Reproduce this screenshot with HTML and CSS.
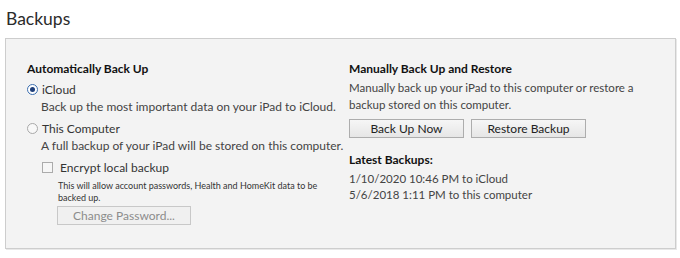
FILE: index.html
```html
<!DOCTYPE html>
<html>
<head>
<meta charset="utf-8">
<link rel="stylesheet" href="styles.css">
</head>
<body>
<h1 class="title">Backups</h1>
<div class="panel">
  <div class="col left">
    <div class="heading">Automatically Back Up</div>
    <div class="radio-row">
      <span class="radio checked"></span><span class="label">iCloud</span>
    </div>
    <div class="desc">Back up the most important data on your iPad to iCloud.</div>
    <div class="radio-row second">
      <span class="radio"></span><span class="label">This Computer</span>
    </div>
    <div class="desc">A full backup of your iPad will be stored on this computer.</div>
    <div class="check-row">
      <span class="checkbox"></span><span class="label">Encrypt local backup</span>
    </div>
    <div class="small">This will allow account passwords, Health and HomeKit data to be<br>backed up.</div>
    <div class="btn disabled pw">Change Password...</div>
  </div>
  <div class="col right">
    <div class="heading">Manually Back Up and Restore</div>
    <div class="rdesc">Manually back up your iPad to this computer or restore a<br>backup stored on this computer.</div>
    <div class="btns">
      <div class="btn b1">Back Up Now</div>
      <div class="btn b2">Restore Backup</div>
    </div>
    <div class="heading latest">Latest Backups:</div>
    <div class="line">1/10/2020 10:46 PM to iCloud</div>
    <div class="line">5/6/2018 1:11 PM to this computer</div>
  </div>
</div>
</body>
</html>
```
FILE: styles.css
```css
html, body { margin: 0; padding: 0; background: #fff; }
body {
  font-family: Lato, "Noto Sans", sans-serif;
  font-size: 12px;
  color: #333;
  width: 680px;
  height: 258px;
  overflow: hidden;
  white-space: nowrap;
}
.title {
  margin: 0;
  padding: 8px 0 0 6px;
  height: 30px;
  box-sizing: border-box;
  font-weight: normal;
  font-size: 17.5px;
  line-height: 22px;
  color: #2b2b2b;
}
.panel {
  margin: 8px 0 0 5px;
  width: 671px;
  height: 211px;
  box-sizing: border-box;
  background: #f3f3f3;
  border: 1px solid #cdcdcd;
  box-shadow: 1px 1px 0 #e8e8e8;
  display: flex;
  padding: 22px 0 0 21px;
}
.col.left { width: 322px; }
.heading {
  font-weight: bold;
  color: #111;
  font-size: 12px;
  line-height: 16px;
}
.radio-row, .check-row {
  display: flex;
  align-items: center;
  height: 16px;
  margin-top: 4px;
}
.radio-row.second { margin-top: 5px; }
.radio {
  width: 9px;
  height: 9px;
  border: 1px solid #a8a8a8;
  border-radius: 50%;
  background: #f8f8f8;
  margin-right: 4px;
  position: relative;
  box-sizing: content-box;
}
.radio.checked { border-color: #3c6fb0; background: #fff; }
.radio.checked::after {
  content: "";
  position: absolute;
  left: 2px; top: 2px;
  width: 5px; height: 5px;
  border-radius: 50%;
  background: #1f3f7a;
}
.label { font-size: 12px; color: #333; }
.desc {
  margin-left: 14px;
  margin-top: 2px;
  line-height: 16px;
  font-size: 12px;
  color: #444;
}
.check-row { margin-left: 15px; margin-top: 5px; }
.checkbox {
  width: 9px; height: 9px;
  border: 1px solid #ababab;
  background: #f6f6f6;
  margin-right: 7px;
}
.small {
  margin-left: 31px;
  margin-top: 5px;
  font-size: 9px;
  line-height: 12px;
  color: #333;
}
.btn {
  box-sizing: border-box;
  height: 19px;
  border: 1px solid #adadad;
  background: linear-gradient(#f6f6f6, #e6e6e6);
  text-align: center;
  font-size: 12px;
  line-height: 17px;
  color: #222;
}
.btn.disabled {
  color: #8c8c8c;
  border-color: #c8c8c8;
  background: #f0f0f0;
}
.pw { width: 134px; margin: 2px 0 0 30px; }
.col.right { width: 300px; }
.rdesc {
  margin-top: 2px;
  line-height: 17px;
  font-size: 11.5px;
  color: #444;
}
.btns { display: flex; gap: 7px; margin-top: 6px; }
.b1 { width: 115px; }
.b2 { width: 115px; }
.latest { margin-top: 14px; }
.line { font-size: 11.5px; line-height: 16px; color: #444; }
.latest + .line { margin-top: 3px; }
```
